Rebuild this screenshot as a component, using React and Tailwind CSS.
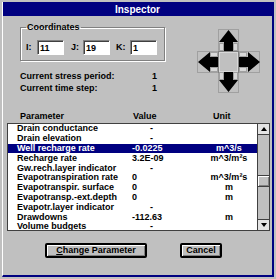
import React from "react";

const ROWS = [
  ["Drain conductance", "-", ""],
  ["Drain elevation", "-", ""],
  ["Well recharge rate", "-0.0225", "m^3/s"],
  ["Recharge rate", "3.2E-09", "m^3/m²s"],
  ["Gw.rech.layer indicator", "-", ""],
  ["Evapotranspiration rate", "0", "m^3/m²s"],
  ["Evapotranspir. surface", "0", "m"],
  ["Evapotransp.-ext.depth", "0", "m"],
  ["Evapotr.layer indicator", "-", ""],
  ["Drawdowns", "-112.63", "m"],
  ["Volume budgets", "-", ""],
];

function ArrowPad() {
  const cell = "#c0c0c0";
  const edge = "#a0a0a0";
  return (
    <svg width="64" height="64" viewBox="0 0 64 64" className="block">
      {/* cells */}
      <rect x="21.5" y="0.5" width="20" height="22" fill={cell} stroke={edge} />
      <rect x="0.5" y="22.5" width="21" height="21" fill={cell} stroke={edge} />
      <rect x="41.5" y="22.5" width="21" height="21" fill={cell} stroke={edge} />
      <rect x="21.5" y="43.5" width="20" height="20" fill={cell} stroke={edge} />
      <rect x="21.5" y="22.5" width="20" height="21" fill={cell} stroke="#808080" />
      <rect x="22.5" y="23.5" width="18" height="19" fill="none" stroke="#d8d8d8" />
      {/* small bevel blocks */}
      <rect x="22.5" y="14.5" width="4" height="7" fill="#d8d8d8" stroke={edge} />
      <rect x="36.5" y="14.5" width="4" height="7" fill="#d8d8d8" stroke={edge} />
      <rect x="22.5" y="43.5" width="4" height="7" fill="#d8d8d8" stroke={edge} />
      <rect x="36.5" y="43.5" width="4" height="7" fill="#d8d8d8" stroke={edge} />
      <rect x="13.5" y="23.5" width="7" height="4" fill="#d8d8d8" stroke={edge} />
      <rect x="13.5" y="38.5" width="7" height="4" fill="#d8d8d8" stroke={edge} />
      <rect x="42.5" y="23.5" width="7" height="4" fill="#d8d8d8" stroke={edge} />
      <rect x="42.5" y="38.5" width="7" height="4" fill="#d8d8d8" stroke={edge} />
      {/* arrows */}
      <path d="M31.5 1 L41 13 L36 13 L36 22 L27 22 L27 13 L22 13 Z" fill="#000" />
      <path d="M31.5 63 L41 51 L36 51 L36 43 L27 43 L27 51 L22 51 Z" fill="#000" />
      <path d="M1 33 L13 23 L13 28 L21 28 L21 38 L13 38 L13 43 Z" fill="#000" />
      <path d="M63 33 L51 23 L51 28 L42 28 L42 38 L51 38 L51 43 Z" fill="#000" />
    </svg>
  );
}

function Field({ value }) {
  return (
    <input
      readOnly
      value={value}
      className="h-[15px] w-[27px] border border-[#808080] border-b-white border-r-white bg-white pl-[2px] text-[9px] font-bold text-black shadow-[inset_1px_1px_0_#404040] outline-none"
    />
  );
}

function ScrollButton({ down }) {
  return (
    <div className="flex h-[11px] items-center justify-center border-b border-t border-[#404040] bg-[#e4e4e4] first:border-t-0 last:border-b-0">
      <svg width="6" height="4" viewBox="0 0 6 4">
        <path d={down ? "M0 0 L6 0 L3 4 Z" : "M3 0 L6 4 L0 4 Z"} fill="#000" />
      </svg>
    </div>
  );
}

export default function App() {
  return (
    <div className="h-[279px] w-[276px] bg-[#c0c0c0] p-[2px] font-['Liberation_Sans',Arial,sans-serif] text-[9px] font-bold text-black">
      <div className="flex h-full flex-col border-b-2 border-l border-r-2 border-b-[#000080] border-l-white border-r-[#000080]">
        <div className="flex h-[14px] items-center justify-center bg-[#000080] text-[10px] text-white">
          Inspector
        </div>

        <div className="flex">
          <div className="ml-[17px] w-[145px]">
            <fieldset className="mt-[6px] border border-[#808080] px-[5px] pb-[5px] pt-[8px] shadow-[1px_1px_0_#fff,inset_1px_1px_0_#fff]">
              <legend className="ml-[0px] px-[1px] leading-[10px]">Coordinates</legend>
              <div className="flex items-center">
                <span className="w-[11px]">I:</span>
                <Field value="11" />
                <span className="ml-[7px] w-[12px]">J:</span>
                <Field value="19" />
                <span className="ml-[6px] w-[14px]">K:</span>
                <Field value="1" />
              </div>
            </fieldset>
            <div className="mt-[10px] flex h-[12px] items-center">
              <span className="w-[132px]">Current stress period:</span>
              <span>1</span>
            </div>
            <div className="flex h-[12px] items-center">
              <span className="w-[132px]">Current time step:</span>
              <span>1</span>
            </div>
          </div>
          <div className="ml-[32px] mt-[13px]">
            <ArrowPad />
          </div>
        </div>

        <div className="ml-[17px] mt-[16px] flex h-[12px] items-center">
          <span className="w-[113px]">Parameter</span>
          <span className="w-[80px]">Value</span>
          <span>Unit</span>
        </div>

        <div className="ml-[4px] flex h-[108px] w-[263px] border border-[#404040] bg-white">
          <div className="flex-1 overflow-hidden">
            {ROWS.map(([name, value, unit], i) => {
              const sel = i === 2;
              return (
                <div
                  key={name}
                  className={`flex h-[9.8px] items-center leading-none ${sel ? "bg-[#000080] text-white" : ""}`}
                >
                  <span className="w-[124px] whitespace-nowrap pl-[9px]">{name}</span>
                  <span className={`w-[76px] ${value === "-" ? "pl-[18px]" : ""}`}>{value}</span>
                  <span className="w-[42px] text-center whitespace-nowrap">{unit}</span>
                </div>
              );
            })}
          </div>
          <div className="flex w-[12px] flex-col border-l border-[#404040] bg-[#c0c0c0]">
            <ScrollButton />
            <div className="mt-[40px] h-[12px] border-y border-[#404040] bg-[#c0c0c0] shadow-[inset_1px_1px_0_#fff,inset_-1px_-1px_0_#808080]" />
            <div className="flex-1" />
            <ScrollButton down />
          </div>
        </div>

        <div className="mt-[12px] flex">
          <button className="ml-[42px] flex h-[15px] w-[102px] items-center justify-center rounded-[2px] border-2 border-black bg-[#c0c0c0] shadow-[inset_1px_1px_0_#fff,inset_-1px_-1px_0_#808080]">
            <span>
              <span className="underline">C</span>hange Parameter
            </span>
          </button>
          <button className="ml-[33px] flex h-[15px] w-[42px] items-center justify-center rounded-[2px] border-2 border-black bg-[#c0c0c0] shadow-[inset_1px_1px_0_#fff,inset_-1px_-1px_0_#808080]">
            Cancel
          </button>
        </div>
      </div>
    </div>
  );
}
